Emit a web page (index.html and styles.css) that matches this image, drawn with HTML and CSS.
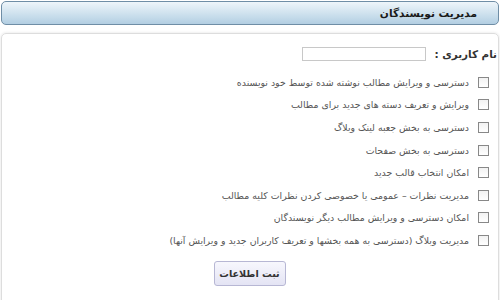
FILE: index.html
```html
<!DOCTYPE html>
<html lang="fa" dir="rtl">
<head>
  <meta charset="utf-8">
  <title>مدیریت نویسندگان</title>
  <link rel="stylesheet" href="styles.css">
</head>
<body>
  <div class="panel-head">مدیریت نویسندگان</div>
  <div class="panel-body">
    <div class="user-row">
      <label for="username">نام کاربری :</label>
      <input type="text" id="username">
    </div>
    <ul class="perms">
      <li><span class="box"></span>دسترسی و ویرایش مطالب نوشته شده توسط خود نویسنده</li>
      <li><span class="box"></span>ویرایش و تعریف دسته های جدید برای مطالب</li>
      <li><span class="box"></span>دسترسی به بخش جعبه لینک وبلاگ</li>
      <li><span class="box"></span>دسترسی به بخش صفحات</li>
      <li><span class="box"></span>امکان انتخاب قالب جدید</li>
      <li><span class="box"></span>مدیریت نظرات – عمومی یا خصوصی کردن نظرات کلیه مطالب</li>
      <li><span class="box"></span>امکان دسترسی و ویرایش مطالب دیگر نویسندگان</li>
      <li><span class="box"></span>مدیریت وبلاگ (دسترسی به همه بخشها و تعریف کاربران جدید و ویرایش آنها)</li>
    </ul>
    <div class="actions">
      <button>ثبت اطلاعات</button>
    </div>
  </div>
</body>
</html>
```

FILE: styles.css
```css
html {
  overflow: hidden;
}

body {
  margin: 0;
  padding: 1px;
  font-family: "DejaVu Sans", sans-serif;
  font-size: 9.4px;
  color: #555;
  background: #fff;
  height: 300px;
  box-sizing: border-box;
  overflow: hidden;
}

.panel-head {
  height: 22px;
  line-height: 22px;
  padding-right: 21px;
  border: 1px solid #6f8ea6;
  border-radius: 5px;
  background: linear-gradient(#eef5fa, #c4dbea 70%, #b3cee2);
  color: #1a1a1a;
  font-weight: bold;
  font-size: 10.6px;
}

.panel-body {
  margin-top: 8px;
  border: 1px solid #ddd;
  border-radius: 5px;
  box-shadow: 0 0 3px rgba(0,0,0,0.12);
  padding: 12px 1px 40px 0;
}

.user-row {
  display: flex;
  align-items: center;
  gap: 8px;
  height: 16px;
  margin-bottom: 9px;
}

.user-row label {
  font-weight: bold;
  font-size: 10.4px;
  color: #333;
}

.user-row input {
  width: 122px;
  height: 12px;
  border: 1px solid #c8c8c8;
  padding: 0;
}

.perms {
  list-style: none;
  margin: 0;
  padding: 0 8px 0 0;
}

.perms li {
  display: flex;
  align-items: center;
  height: 22.6px;
}

.box {
  width: 9px;
  height: 9px;
  border: 1px solid #888;
  background: linear-gradient(#f2f2f2, #fff);
  margin-left: 9px;
  flex-shrink: 0;
}

.actions {
  display: flex;
  justify-content: center;
  margin-top: 9px;
}

.actions button {
  width: 72px;
  height: 25px;
  padding: 0;
  white-space: nowrap;
  font-family: "DejaVu Sans", sans-serif;
  font-size: 9.6px;
  font-weight: bold;
  color: #333;
  border: 1px solid #b7b7d4;
  border-radius: 3px;
  background: linear-gradient(#f7f7fd, #e4e4f4);
}
```
